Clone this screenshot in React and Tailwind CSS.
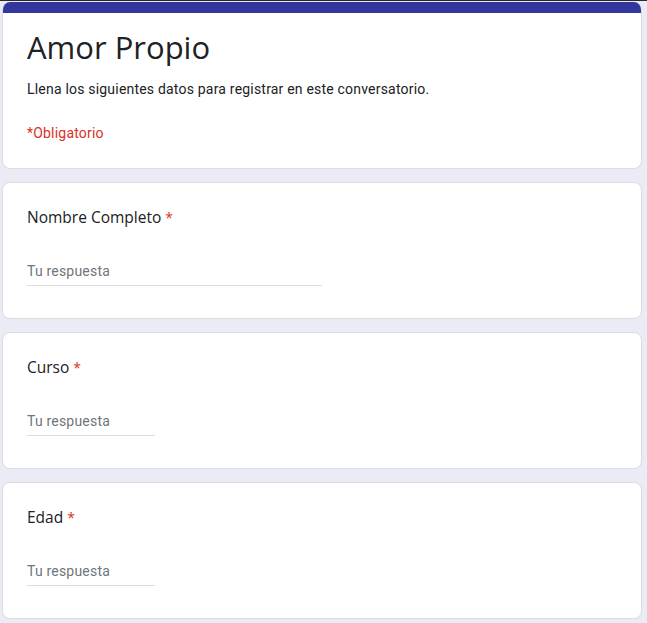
export default function App() {
  const questions = [
    { label: "Nombre Completo", line: "w-[295px]" },
    { label: "Curso", line: "w-[128px]" },
    { label: "Edad", line: "w-[128px]" },
  ];
  return (
    <div className="w-[647px] h-[623px] bg-[#ebebf5] overflow-hidden">
      <div className="h-px bg-[#2a2a2a]" />
      <div className="pl-[2px] pr-[5px] pt-px flex flex-col gap-[13px]">
        <div className="rounded-lg bg-white border border-[#dadce0] border-t-0 overflow-hidden">
          <div className="h-[11px] bg-[#33379b]" />
          <div className="px-6 pt-[14px] pb-[25px]">
            <h1 className="text-[31px] leading-[40px] text-[#202124]" style={{ fontFamily: '"Open Sans", sans-serif' }}>
              Amor Propio
            </h1>
            <p className="mt-[12px] text-[14px] leading-[20px] tracking-[0.2px] text-[#202124]" style={{ fontFamily: 'Roboto, sans-serif' }}>
              Llena los siguientes datos para registrar en este conversatorio.
            </p>
            <p className="mt-[24px] text-[14px] leading-[20px] tracking-[0.2px] text-[#d93025]" style={{ fontFamily: 'Roboto, sans-serif' }}>
              *Obligatorio
            </p>
          </div>
        </div>
        {questions.map((q) => (
          <div key={q.label} className="rounded-lg bg-white border border-[#dadce0] h-[137px] px-6 pt-[22px]">
            <div className="text-[15.5px] leading-[24px] text-[#202124]" style={{ fontFamily: '"Open Sans", sans-serif' }}>
              {q.label} <span className="text-[#d93025] text-[14px]">*</span>
            </div>
            <div className={`${q.line} mt-[28px] border-b border-[#dadce0] pb-[3px]`}>
              <span className="text-[14px] leading-[20px] tracking-[0.2px] text-[#70757a]" style={{ fontFamily: 'Roboto, sans-serif' }}>
                Tu respuesta
              </span>
            </div>
          </div>
        ))}
      </div>
    </div>
  );
}
